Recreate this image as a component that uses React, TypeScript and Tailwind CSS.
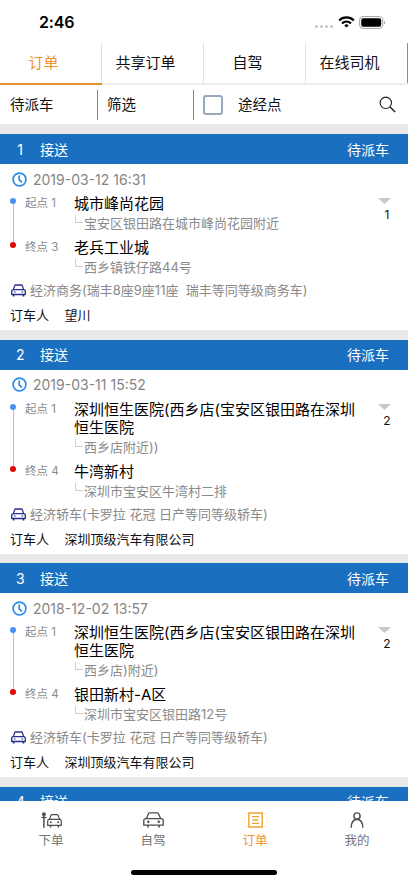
import type { ReactNode } from "react";
import clsx from "clsx";

type Stop = { label: string; title: string; detail: string };

type Order = {
  n: number;
  date: string;
  count: number;
  stops: Stop[];
  car: string;
  booker: string;
};

const orders: Order[] = [
  {
    n: 1,
    date: "2019-03-12 16:31",
    count: 1,
    stops: [
      { label: "起点 1", title: "城市峰尚花园", detail: "宝安区银田路在城市峰尚花园附近" },
      { label: "终点 3", title: "老兵工业城", detail: "西乡镇铁仔路44号" },
    ],
    car: "经济商务(瑞丰8座9座11座  瑞丰等同等级商务车)",
    booker: "望川",
  },
  {
    n: 2,
    date: "2019-03-11 15:52",
    count: 2,
    stops: [
      {
        label: "起点 1",
        title: "深圳恒生医院(西乡店(宝安区银田路在深圳\n恒生医院",
        detail: "西乡店附近))",
      },
      { label: "终点 4", title: "牛湾新村", detail: "深圳市宝安区牛湾村二排" },
    ],
    car: "经济轿车(卡罗拉 花冠 日产等同等级轿车)",
    booker: "深圳顶级汽车有限公司",
  },
  {
    n: 3,
    date: "2018-12-02 13:57",
    count: 2,
    stops: [
      {
        label: "起点 1",
        title: "深圳恒生医院(西乡店(宝安区银田路在深圳\n恒生医院",
        detail: "西乡店)附近)",
      },
      { label: "终点 4", title: "银田新村-A区", detail: "深圳市宝安区银田路12号" },
    ],
    car: "经济轿车(卡罗拉 花冠 日产等同等级轿车)",
    booker: "深圳顶级汽车有限公司",
  },
];

const tabs = ["订单", "共享订单", "自驾", "在线司机"];

function StatusBar() {
  return (
    <div className="flex h-[43px] shrink-0 items-start justify-between pt-[12px] pr-[22px] pl-[39px]">
      <span className="text-[16px] leading-5 font-semibold tracking-[-0.2px] text-black">2:46</span>
      <div className="flex h-5 items-center">
        <div className="mt-[8px] mr-[5px] flex gap-[2px]">
          {[0, 1, 2, 3].map((i) => (
            <span key={i} className="size-[3px] rounded-full bg-[#c4c4c4]" />
          ))}
        </div>
        <svg width="17" height="12" viewBox="0 0 17 12" fill="none" stroke="#000" strokeWidth="2.1">
          <path d="M1.2 4.4a10.4 10.4 0 0 1 14.6 0" />
          <path d="M4 7.4a6.4 6.4 0 0 1 9 0" />
          <path d="M8.5 11.6 6.3 9.4a3.1 3.1 0 0 1 4.4 0z" fill="#000" stroke="none" />
        </svg>
        <svg className="ml-[4px]" width="27" height="13" viewBox="0 0 27 13">
          <rect x="0.6" y="0.6" width="23.2" height="11.8" rx="3.4" fill="none" stroke="#a3a3a3" strokeWidth="1" />
          <rect x="2.2" y="2.2" width="20" height="8.6" rx="2" />
          <path d="M25 4.4c1.3.5 1.3 3.7 0 4.2z" fill="#a3a3a3" />
        </svg>
      </div>
    </div>
  );
}

function Tabs() {
  return (
    <div className="grid h-[42px] shrink-0 grid-cols-4 text-[15px]">
      {tabs.map((t, i) => (
        <div
          key={t}
          className={clsx(
            "flex border-b-2",
            i === 0 ? "border-[#e8912f] text-[#f0932f]" : "border-[#eeeeef]",
          )}
        >
          <div
            className={clsx(
              "flex h-10 flex-1 items-center justify-center border-r pr-[14px]",
              i === 3 ? "border-[#8c8c8c]" : "border-[#e0e0e2]",
            )}
          >
            {t}
          </div>
        </div>
      ))}
    </div>
  );
}

function Filters() {
  return (
    <div className="flex h-[39px] shrink-0 items-center text-[14.5px]">
      <div className="w-[97px] pl-[10px]">待派车</div>
      <div className="h-[30px] w-px bg-[#858585]" />
      <div className="w-[95px] pl-[9px]">筛选</div>
      <div className="h-[30px] w-px bg-[#858585]" />
      <div className="ml-[9px] size-[20px] rounded-[3px] border-2 border-[#9aa8bd]" />
      <div className="ml-[15px] flex-1">途经点</div>
      <svg className="mr-[12px]" width="17" height="17" viewBox="0 0 17 17" fill="none" stroke="#222" strokeWidth="1.1">
        <circle cx="6.8" cy="6.8" r="5.7" />
        <path d="m11 11 5.2 5" strokeWidth="1.5" />
      </svg>
    </div>
  );
}

function CardHeader({ n }: { n: number }) {
  return (
    <div className="flex h-[30px] shrink-0 items-center bg-[#1b6fc0] pr-[19px] pl-[16px] text-[14px] text-white">
      <span className="w-[24px]">
        <span className="inline-block w-[8px] text-center">{n}</span>
      </span>
      <span className="flex-1">接送</span>
      <span>待派车</span>
    </div>
  );
}

function StopRow({ stop }: { stop: Stop }) {
  return (
    <div className="flex">
      <div className="w-[49px] shrink-0 text-[11.5px] leading-[17px] text-[#8a8a8a]">{stop.label}</div>
      <div>
        <div className="text-[15px] leading-[18px] whitespace-pre text-black">{stop.title}</div>
        <div className="flex h-[21px]">
          <div className="mt-[2px] mr-px ml-px h-[8px] w-[8px] border-b border-l border-[#cfcfcf]" />
          <div className="text-[13px] leading-[21px] text-[#8a8a8a]">{stop.detail}</div>
        </div>
      </div>
    </div>
  );
}

function OrderCard({ order }: { order: Order }) {
  return (
    <div className="shrink-0">
      <CardHeader n={order.n} />
      <div className="bg-white">
        <div className="flex h-[31px] items-center pb-px pl-[12px]">
          <svg width="15" height="15" viewBox="0 0 15 15" fill="none" stroke="#2a8ce6" strokeWidth="1.7">
            <circle cx="7.5" cy="7.5" r="6.4" />
            <path d="M7.2 3.6v4.2l2.7 2.6" />
          </svg>
          <span className="ml-[6px] text-[14px] text-[#858585]">{order.date}</span>
        </div>
        <div className="flex pl-[10px]">
          <div className="flex w-[6px] flex-col items-center pt-[3px] pb-[30px]">
            <span className="size-[6px] shrink-0 rounded-full bg-[#4a90f5]" />
            <span className="w-px flex-1 bg-[#bdbdbd]" />
            <span className="size-[6px] shrink-0 rounded-full bg-[#dc0a0a]" />
          </div>
          <div className="ml-[9px] flex flex-1 flex-col gap-[5px]">
            {order.stops.map((s) => (
              <StopRow key={s.label} stop={s} />
            ))}
          </div>
          <div className="flex w-[30px] flex-col pt-[3px]">
            <svg width="13" height="6" viewBox="0 0 13 6" fill="#c8c8c8">
              <path d="M0 0h13L6.5 6z" />
            </svg>
            <span className="w-[18px] text-center text-[12px] leading-[22px]">{order.count}</span>
          </div>
        </div>
        <div className="flex h-[26px] items-center pl-[11px]">
          <CarBadge />
          <span className="ml-[4px] text-[13px] whitespace-pre text-[#8a8a8a]">{order.car}</span>
        </div>
        <div className="flex h-[26px] items-start pt-px pl-[10px] text-[13px] leading-[20px]">
          <span className="w-[54.5px]">订车人</span>
          <span>{order.booker}</span>
        </div>
      </div>
    </div>
  );
}

function CarBadge() {
  return (
    <svg className="mb-px" width="15" height="13" viewBox="0 0 15 13" fill="none" stroke="#2b2f86" strokeWidth="1.3" strokeLinejoin="round">
      <path d="M2.4 5.6 3.6 1.9Q3.8 1 4.7 1h5.6q.9 0 1.1.9l1.2 3.7" />
      <path d="M2.6 5.6h9.8q1.9 0 1.9 1.8v3.1H.7V7.4q0-1.8 1.9-1.8z" />
      <path d="M2.6 10.6v1.8M12.4 10.6v1.8" strokeWidth="1.7" />
      <path d="M2.8 8h1.7M10.5 8h1.7" strokeWidth="1.1" />
    </svg>
  );
}

function CarFront({ width }: { width: number }) {
  return (
    <svg width={width} height="16" viewBox={`0 0 ${width} 16`} fill="none" stroke="#4d4d4d" strokeWidth="1.3">
      <g transform={`scale(${width / 21} 1)`}>
        <path d="M3.4 6.6 5.6 1.5q.3-.7 1-.7h7.8q.7 0 1 .7l2.2 5.1" />
        <path d="M2.8 6.6h15.4q2 0 2 2v4.6H.8V8.6q0-2 2-2z" />
        <path d="M4.9 13.2v2.3M16.1 13.2v2.3" strokeWidth="1.6" />
      </g>
      <circle cx={width * 0.25} cy="9.8" r="1.2" fill="#4d4d4d" stroke="none" />
      <circle cx={width * 0.75} cy="9.8" r="1.2" fill="#4d4d4d" stroke="none" />
    </svg>
  );
}

function PersonCar() {
  return (
    <svg width="21" height="16" viewBox="0 0 21 16" fill="none" stroke="#4d4d4d" strokeWidth="1.2">
      <circle cx="2.9" cy="2.2" r="1.9" fill="#4d4d4d" stroke="none" />
      <path d="M.4 5.5h5" />
      <path d="M2.9 4v11.7" strokeWidth="1.5" />
      <path d="m8.4 7.4 1.5-4q.3-.8 1-.8h5.2q.7 0 1 .8l1.5 4" />
      <path d="M8.4 7.4h10.2q1.7 0 1.7 1.7v4.3H6.7V9.1q0-1.7 1.7-1.7z" />
      <path d="M9.6 13.4v2.2M17.4 13.4v2.2" strokeWidth="1.5" />
      <circle cx="9.9" cy="10.3" r="1" fill="#4d4d4d" stroke="none" />
      <circle cx="17.1" cy="10.3" r="1" fill="#4d4d4d" stroke="none" />
    </svg>
  );
}

function NavItem({ label, active, children }: { label: string; active?: boolean; children: ReactNode }) {
  return (
    <div className={clsx("flex flex-col items-center", active ? "text-[#f0932f]" : "text-[#757575]")}>
      <div className="flex h-[16px] items-end">{children}</div>
      <span className="mt-[3px] text-[12.5px] leading-[20px]">{label}</span>
    </div>
  );
}

function BottomNav() {
  return (
    <div className="flex h-[82px] shrink-0 flex-col items-center justify-between bg-white pt-[11px] pb-[8px]">
      <div className="grid w-full grid-cols-4">
        <NavItem label="下单">
          <PersonCar />
        </NavItem>
        <NavItem label="自驾">
          <CarFront width={21} />
        </NavItem>
        <NavItem label="订单" active>
          <svg width="15" height="16" viewBox="0 0 15 16" fill="none" stroke="#eea22f" strokeWidth="1.4">
            <path d="M.8 1h13.4v14H.8zM4 4.6h7M4.6 8h5.8M4 11.4h7" />
          </svg>
        </NavItem>
        <NavItem label="我的">
          <svg width="14" height="16" viewBox="0 0 14 16" fill="none" stroke="#4d4d4d" strokeWidth="1.4">
            <circle cx="7" cy="4" r="3.1" />
            <path d="M1.2 15.8c0-4.4 1.8-8.3 5.8-8.6 4 .3 5.8 4.2 5.8 8.6" />
          </svg>
        </NavItem>
      </div>
      <div className="h-[5px] w-[146px] rounded-full bg-black" />
    </div>
  );
}

export default function App() {
  return (
    <div className="flex h-[883px] w-[408px] flex-col overflow-hidden bg-white font-['Inter','Noto_Sans_CJK_SC',sans-serif] text-[#111]">
      <StatusBar />
      <Tabs />
      <Filters />
      <div className="flex min-h-0 flex-1 flex-col gap-[9.5px] overflow-hidden bg-[#e9e9eb] pt-[10px]">
        {orders.map((o) => (
          <OrderCard key={o.n} order={o} />
        ))}
        <CardHeader n={4} />
      </div>
      <BottomNav />
    </div>
  );
}
